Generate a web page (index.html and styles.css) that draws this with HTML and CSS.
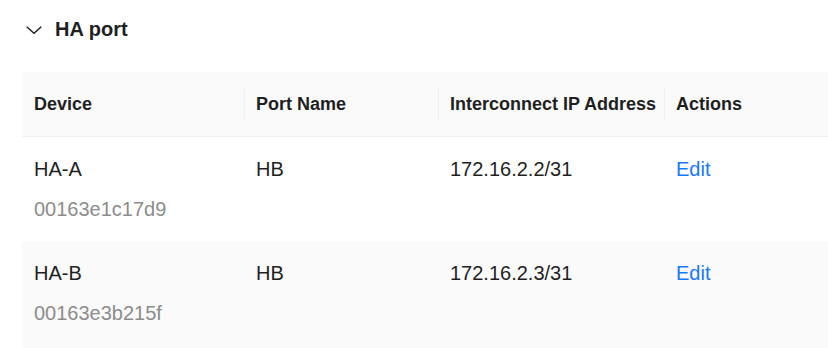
FILE: index.html
```html
<!DOCTYPE html>
<html lang="en">
<head>
    <meta charset="UTF-8">
    <meta name="viewport" content="width=device-width, initial-scale=1.0">
    <title>HA port</title>
    <link rel="stylesheet" href="styles.css">
</head>
<body>
    <div class="section">
        <!-- Collapsible title -->
        <div class="section-title">
            <svg class="chevron" width="16" height="8" viewBox="0 0 16 8">
                <polyline points="0.7,0.7 8,7.3 15.3,0.7" fill="none" stroke="#1f1f1f" stroke-width="1.4"/>
            </svg>
            <span>HA port</span>
        </div>

        <table class="port-table">
            <colgroup>
                <col class="col-device">
                <col class="col-port">
                <col class="col-ip">
                <col class="col-actions">
            </colgroup>
            <thead>
                <tr>
                    <th>Device</th>
                    <th class="divided">Port Name</th>
                    <th class="divided">Interconnect IP Address</th>
                    <th class="divided">Actions</th>
                </tr>
            </thead>
            <tbody>
                <tr>
                    <td>
                        <div class="device-name">HA-A</div>
                        <div class="device-id">00163e1c17d9</div>
                    </td>
                    <td>HB</td>
                    <td>172.16.2.2/31</td>
                    <td><a class="link" href="#">Edit</a></td>
                </tr>
                <tr class="hover">
                    <td>
                        <div class="device-name">HA-B</div>
                        <div class="device-id">00163e3b215f</div>
                    </td>
                    <td>HB</td>
                    <td>172.16.2.3/31</td>
                    <td><a class="link" href="#">Edit</a></td>
                </tr>
            </tbody>
        </table>
    </div>
</body>
</html>
```

FILE: styles.css
```css
* {
    margin: 0;
    padding: 0;
    box-sizing: border-box;
}

body {
    font-family: 'Liberation Sans', Arial, sans-serif;
    font-size: 20px;
    color: #1f1f1f;
    background: #fff;
    overflow: hidden;
}

.section {
    padding-left: 22px;
}

/* Title row */
.section-title {
    display: flex;
    align-items: center;
    gap: 13px;
    padding: 16px 0 0 4px;
    height: 42px;
    font-size: 20px;
    font-weight: 700;
    line-height: 26px;
}

.chevron {
    display: block;
    margin-top: 1px;
}

/* Table */
.port-table {
    width: 806px;
    margin-top: 30px;
    border-collapse: collapse;
    table-layout: fixed;
}

.col-device { width: 222px; }
.col-port { width: 194px; }
.col-ip { width: 226px; }

.port-table th {
    position: relative;
    height: 64px;
    padding: 0 12px;
    background: #fafafa;
    border-bottom: 1px solid #f0f0f0;
    text-align: left;
    font-size: 18px;
    font-weight: 700;
    line-height: 24px;
    white-space: nowrap;
}

.port-table th.divided::before {
    content: '';
    position: absolute;
    left: 0;
    top: 16px;
    width: 1px;
    height: 32px;
    background: #f0f0f0;
}

.port-table td {
    padding: 20px 12px 20px 12px;
    vertical-align: top;
    line-height: 24px;
    white-space: nowrap;
}

.port-table tr.hover td {
    background: #fafafa;
    padding-bottom: 30px;
}

.device-id {
    margin-top: 16px;
    color: #8c8c8c;
}

.link {
    color: #1677ff;
    text-decoration: none;
}
```
